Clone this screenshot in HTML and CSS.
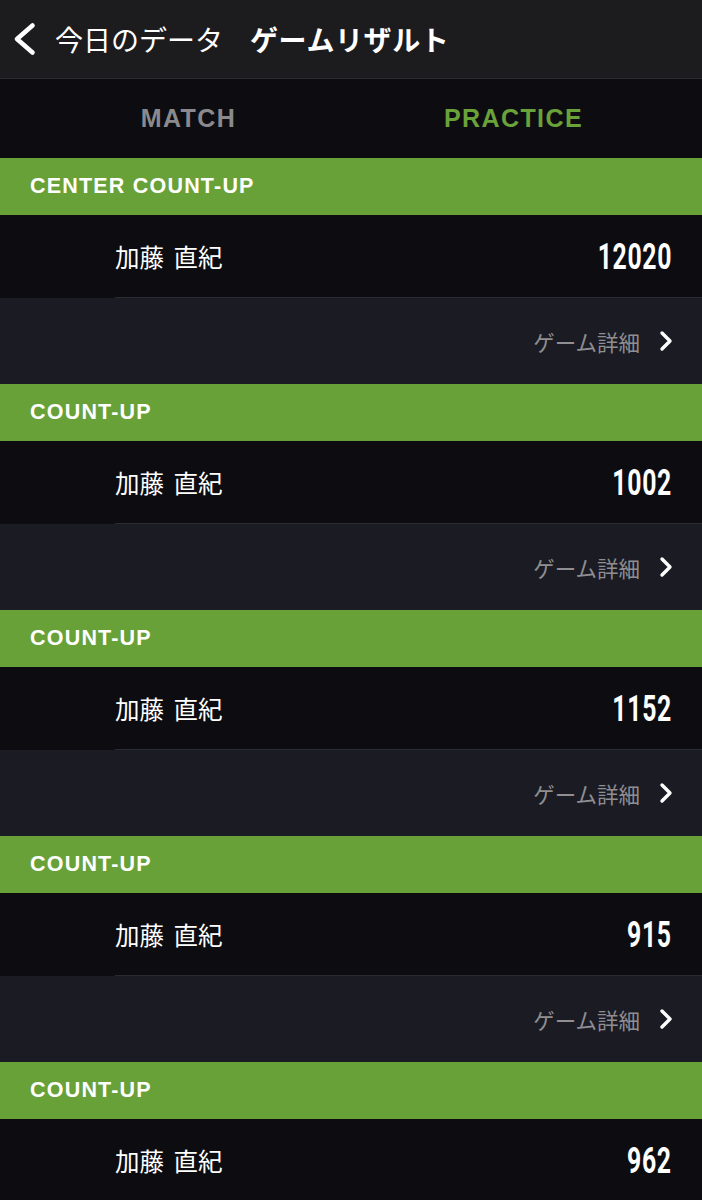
FILE: index.html
```html
<!DOCTYPE html>
<html lang="ja">
<head>
    <meta charset="UTF-8">
    <meta name="viewport" content="width=device-width, initial-scale=1.0">
    <title>ゲームリザルト</title>
    <link rel="stylesheet" href="styles.css">
</head>
<body>

    <!-- Верхняя панель -->
    <div class="topbar">
        <svg class="back" width="28" height="36" viewBox="0 0 28 36">
            <path d="M22.5 4.5 L7 18 L22.5 31.5" fill="none" stroke="#fff" stroke-width="4.6" stroke-linecap="round" stroke-linejoin="round"/>
        </svg>
        <span class="crumb">今日のデータ</span>
        <span class="title">ゲームリザルト</span>
    </div>

    <!-- Вкладки -->
    <div class="tabs">
        <div class="tab">MATCH</div>
        <div class="tab active">PRACTICE</div>
    </div>

    <div class="list">
        <div class="game-head">CENTER COUNT-UP</div>
        <div class="player">
            <span class="name">加藤 直紀</span>
            <span class="points">12020</span>
        </div>
        <div class="detail">
            <span>ゲーム詳細</span>
            <svg class="arrow" width="16" height="22" viewBox="0 0 16 22"><path d="M4 3 L12 11 L4 19" fill="none" stroke="#fff" stroke-width="3.4" stroke-linecap="round" stroke-linejoin="round"/></svg>
        </div>

        <div class="game-head">COUNT-UP</div>
        <div class="player">
            <span class="name">加藤 直紀</span>
            <span class="points">1002</span>
        </div>
        <div class="detail">
            <span>ゲーム詳細</span>
            <svg class="arrow" width="16" height="22" viewBox="0 0 16 22"><path d="M4 3 L12 11 L4 19" fill="none" stroke="#fff" stroke-width="3.4" stroke-linecap="round" stroke-linejoin="round"/></svg>
        </div>

        <div class="game-head">COUNT-UP</div>
        <div class="player">
            <span class="name">加藤 直紀</span>
            <span class="points">1152</span>
        </div>
        <div class="detail">
            <span>ゲーム詳細</span>
            <svg class="arrow" width="16" height="22" viewBox="0 0 16 22"><path d="M4 3 L12 11 L4 19" fill="none" stroke="#fff" stroke-width="3.4" stroke-linecap="round" stroke-linejoin="round"/></svg>
        </div>

        <div class="game-head">COUNT-UP</div>
        <div class="player">
            <span class="name">加藤 直紀</span>
            <span class="points">915</span>
        </div>
        <div class="detail">
            <span>ゲーム詳細</span>
            <svg class="arrow" width="16" height="22" viewBox="0 0 16 22"><path d="M4 3 L12 11 L4 19" fill="none" stroke="#fff" stroke-width="3.4" stroke-linecap="round" stroke-linejoin="round"/></svg>
        </div>

        <div class="game-head">COUNT-UP</div>
        <div class="player">
            <span class="name">加藤 直紀</span>
            <span class="points">962</span>
        </div>
    </div>

</body>
</html>
```

FILE: styles.css
```css
/* Базовые стили */
body {
    margin: 0;
    background-color: #0d0d11;
    color: #fff;
    font-family: "Noto Sans CJK JP", sans-serif;
    overflow: hidden;
}

/* Верхняя панель */
.topbar {
    height: 78px;
    background-color: #1c1c1e;
    border-bottom: 1px solid #2c2c30;
    display: flex;
    align-items: center;
    padding-left: 10px;
}

.back {
    margin-right: 17px;
}

.crumb {
    font-size: 28px;
    margin-right: 27px;
}

.title {
    font-size: 28px;
    font-weight: bold;
    letter-spacing: 0.6px;
}

/* Вкладки */
.tabs {
    height: 79px;
    display: flex;
    padding: 0 26px;
    background-color: #0d0d11;
}

.tab {
    flex: 1;
    display: flex;
    justify-content: center;
    align-items: center;
    font-family: "Liberation Sans", Arial, sans-serif;
    font-weight: bold;
    font-size: 25px;
    letter-spacing: 1.4px;
    color: #8a8a8e;
}

.tab.active {
    color: #6aa23a;
}

/* Список игр */
.game-head {
    height: 57px;
    background-color: #69a139;
    display: flex;
    align-items: center;
    padding-left: 30px;
    font-family: "Liberation Sans", Arial, sans-serif;
    font-weight: bold;
    font-size: 21.5px;
    letter-spacing: 1.2px;
}

.player {
    height: 82px;
    margin-left: 115px;
    padding-right: 30px;
    border-bottom: 1px solid #2a2a32;
    display: flex;
    align-items: center;
    justify-content: space-between;
}

.name {
    font-size: 24.5px;
    word-spacing: 4px;
}

.points {
    font-family: Roboto, sans-serif;
    font-weight: bold;
    font-size: 37px;
    transform: scaleX(0.67);
    transform-origin: right center;
    letter-spacing: 1px;
}

.detail {
    height: 86px;
    background-color: #1b1b23;
    display: flex;
    align-items: center;
    justify-content: flex-end;
    padding-right: 28px;
    font-size: 21.5px;
    color: #8e8e93;
}

.arrow {
    margin-left: 18px;
}
```
